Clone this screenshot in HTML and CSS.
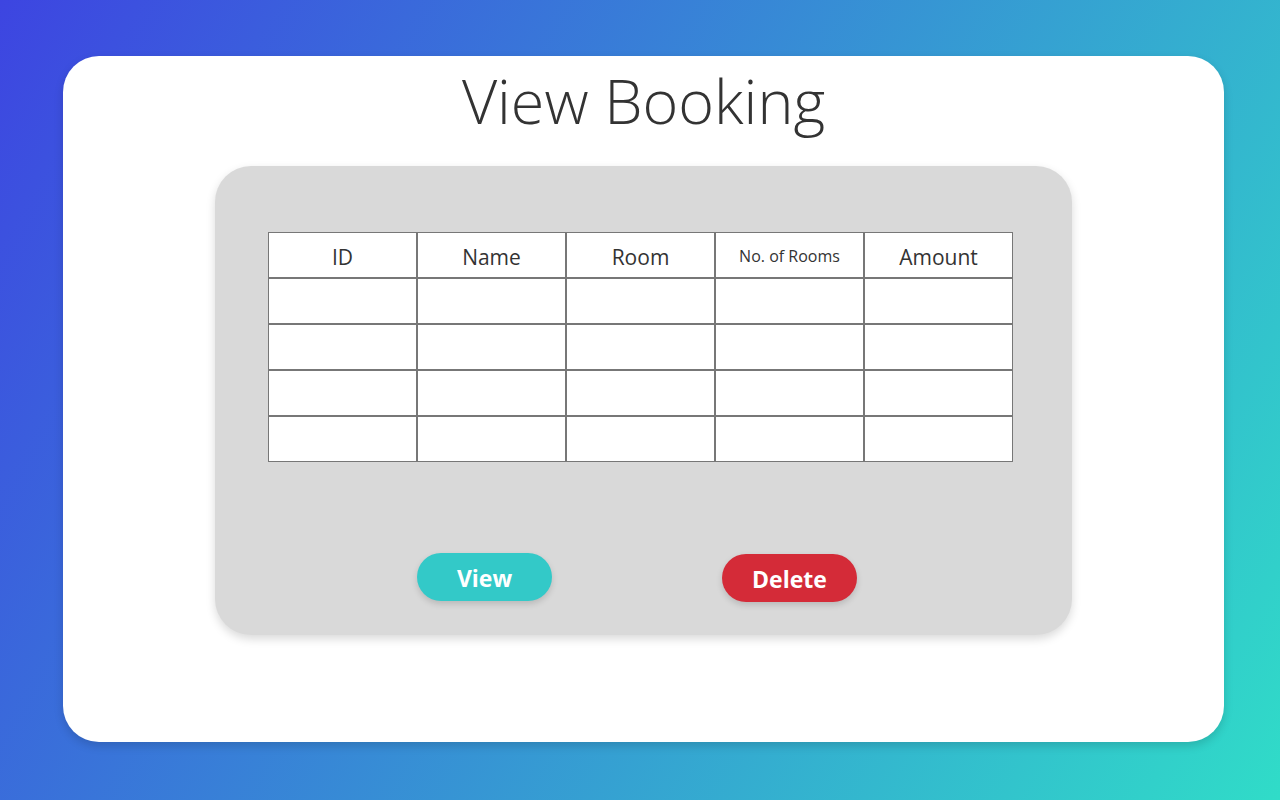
FILE: index.html
```html
<!DOCTYPE html>
<html lang="en">
<head>
  <meta charset="UTF-8" />
  <meta name="viewport" content="width=device-width, initial-scale=1.0"/>
  <title>View Booking</title>
  <link rel="stylesheet" href="styles.css">
</head>
<body>
  <div class="card">
    <h1>View Booking</h1>
    <div class="panel">
      <table class="bookings">
        <thead>
          <tr>
            <th>ID</th>
            <th>Name</th>
            <th>Room</th>
            <th class="small">No. of Rooms</th>
            <th>Amount</th>
          </tr>
        </thead>
        <tbody>
          <tr><td></td><td></td><td></td><td></td><td></td></tr>
          <tr><td></td><td></td><td></td><td></td><td></td></tr>
          <tr><td></td><td></td><td></td><td></td><td></td></tr>
          <tr><td></td><td></td><td></td><td></td><td></td></tr>
        </tbody>
      </table>
      <div class="actions">
        <button class="btn btn-view">View</button>
        <button class="btn btn-delete">Delete</button>
      </div>
    </div>
  </div>
</body>
</html>
```

FILE: styles.css
```css
html, body {
  height: 100%;
}

body {
  margin: 0;
  font-family: "Open Sans", "Noto Sans", sans-serif;
  background: linear-gradient(120deg, #3d45e1 0%, #30dcc8 100%);
  color: #333;
  overflow: hidden;
}

.card {
  box-sizing: border-box;
  width: 1161px;
  height: 686px;
  margin: 56px 0 0 63px;
  background: #fff;
  border-radius: 36px;
  box-shadow: 0 4px 10px rgba(0, 0, 0, 0.15);
  padding-top: 1px;
}

h1 {
  margin: 0;
  text-align: center;
  font-weight: 300;
  font-size: 61px;
  line-height: 88px;
  color: #333;
}

.panel {
  box-sizing: border-box;
  width: 857px;
  height: 469px;
  margin: 21px 0 0 152px;
  background: #d9d9d9;
  border-radius: 36px;
  box-shadow: 0 4px 10px rgba(0, 0, 0, 0.15);
  padding: 66px 0 0 53px;
}

.bookings {
  border-collapse: separate;
  border-spacing: 0;
  background: #fff;
}

.bookings th,
.bookings td {
  box-sizing: border-box;
  width: 149px;
  height: 46px;
  border: 1px solid #777;
  padding: 0;
}

.bookings th {
  font-weight: 400;
  font-size: 21px;
  color: #333;
  padding-top: 3px;
}

.bookings th.small {
  font-size: 16px;
  padding-top: 1px;
}

.actions {
  display: flex;
  gap: 170px;
  margin: 91px 0 0 149px;
}

.btn {
  width: 135px;
  height: 48px;
  border: none;
  border-radius: 24px;
  color: #fff;
  font-family: "Open Sans", "Noto Sans", sans-serif;
  font-weight: 700;
  font-size: 23px;
  padding-top: 3px;
  box-shadow: 0 3px 6px rgba(0, 0, 0, 0.15);
  cursor: pointer;
}

.btn-view {
  background: #33c9c8;
}

.btn-delete {
  background: #d42b38;
  margin-top: 1px;
}
```
